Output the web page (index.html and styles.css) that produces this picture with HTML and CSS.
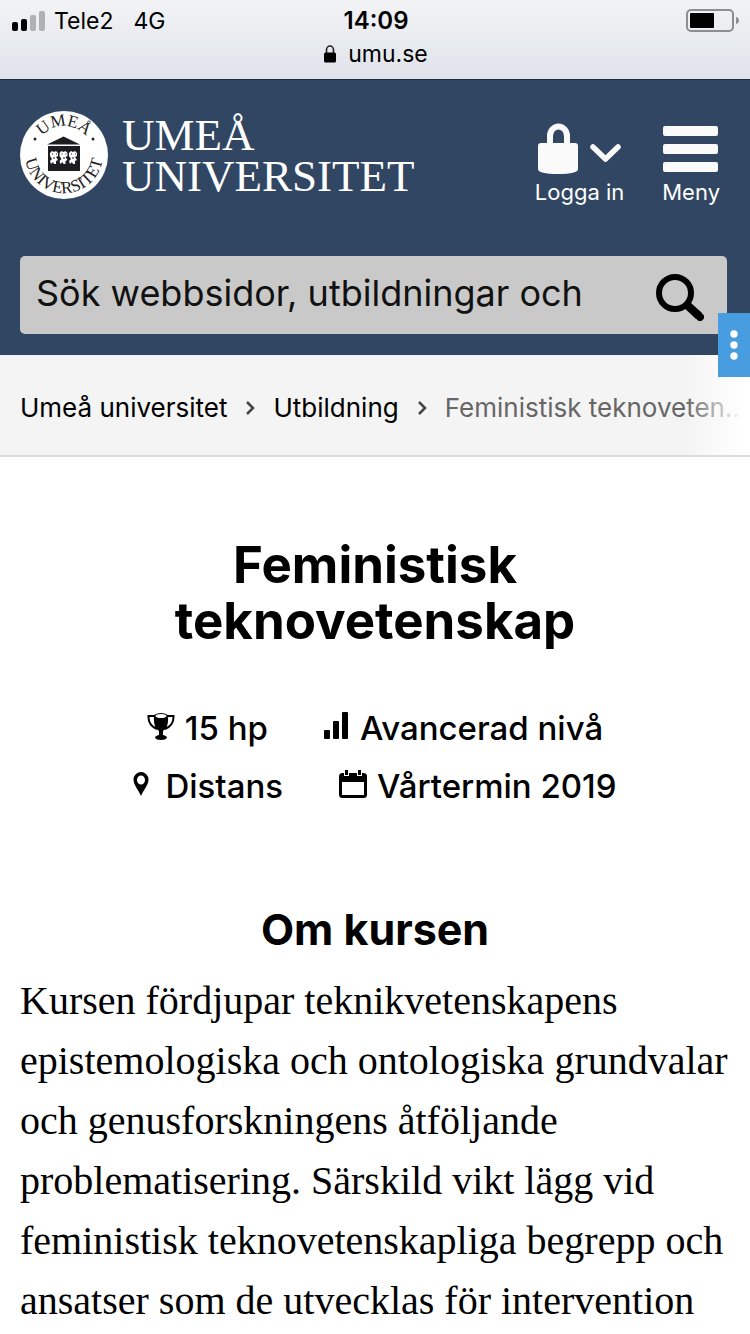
FILE: index.html
```html
<!DOCTYPE html>
<html lang="sv">
<head>
<meta charset="utf-8">
<meta name="viewport" content="width=device-width, initial-scale=1">
<title>Feministisk teknovetenskap</title>
<link rel="stylesheet" href="styles.css">
</head>
<body>
<div class="status">
  <div class="status-row">
    <div class="carrier">
      <svg class="signal" viewBox="0 0 34 20" width="34" height="20" aria-hidden="true">
        <rect x="0" y="11" width="6" height="9" rx="2"/>
        <rect x="9" y="8" width="6" height="12" rx="2"/>
        <rect x="18" y="4" width="6" height="16" rx="2" fill="#b0b1b3"/>
        <rect x="27" y="0" width="6" height="20" rx="2" fill="#b0b1b3"/>
      </svg>
      <span>Tele2</span>
      <span class="network">4G</span>
    </div>
    <span class="clock">14:09</span>
    <svg class="battery" viewBox="0 0 54 24" width="54" height="24" aria-hidden="true">
      <rect x="1" y="1" width="46" height="21" rx="4" fill="none" stroke="#8d8e91" stroke-width="2"/>
      <rect x="4" y="4" width="24" height="15" rx="1"/>
      <path d="M50 8Q53 9 53 11.500T50 15Z" fill="#8d8e91"/>
    </svg>
  </div>
  <div class="address">
    <svg viewBox="0 0 12 18" width="12" height="18" aria-hidden="true">
      <path d="M2.500 8V5a3.500 4 0 0 1 7 0V8" fill="none" stroke="#222" stroke-width="1.600"/>
      <rect x="0" y="7.500" width="12" height="10" rx="1.500"/>
    </svg>
    <span>umu.se</span>
  </div>
</div>

<header class="header">
  <div class="masthead">
    <a class="brand" href="#">
      <svg class="seal" viewBox="0 0 88 88" width="88" height="88" aria-hidden="true">
        <defs>
          <path id="arc-top" d="M15 44a29 29 0 0 1 58 0"/>
          <path id="arc-bottom" d="M9 26A39 39 0 1 0 79 26"/>
        </defs>
        <circle cx="44" cy="44" r="44" fill="#fff"/>
        <text class="seal-text"><textPath href="#arc-top" startOffset="50%" text-anchor="middle">UMEÅ</textPath></text>
        <text class="seal-text"><textPath href="#arc-bottom" startOffset="50%" text-anchor="middle">UNIVERSITET</textPath></text>
        <circle cx="15" cy="28" r="1.500" fill="#222"/>
        <circle cx="73" cy="28" r="1.500" fill="#222"/>
        <path d="M27 33.500L43.500 25.500L60 33.500Z" fill="#1d1d1f"/>
        <rect x="28" y="35" width="32" height="25" fill="#1d1d1f"/>
        <g fill="#fff">
          <path id="owl" d="M30 42l2-2 2 1 2-1 2 2v3l-2 1 2 3-2 1v3h-2l-1-2-2 2-1-3 2-2-2-3z"/>
          <use href="#owl" x="9.500"/>
          <use href="#owl" x="19"/>
        </g>
        <path d="M32 43h1M36 43h1M41.500 43h1M45.500 43h1M51 43h1M55 43h1M33 47h2M43 47h2M52 47h2" stroke="#1d1d1f"/>
      </svg>
      <span class="wordmark">UMEÅ<br>UNIVERSITET</span>
    </a>
    <div class="actions">
      <button class="action" type="button">
        <svg viewBox="0 0 84 52" width="84" height="52" aria-hidden="true">
          <path d="M12 24V13a8.500 9.500 0 0 1 17 0V24" fill="none" stroke="#fafafa" stroke-width="6"/>
          <path d="M0 23q0-3 3-3H37q3 0 3 3V46q0 5-20 5T0 46Z" fill="#fafafa"/>
          <path d="M55 24l12.500 12L80 24" fill="none" stroke="#fafafa" stroke-width="5.500" stroke-linecap="round" stroke-linejoin="round"/>
        </svg>
        <span>Logga in</span>
      </button>
      <button class="action action-menu" type="button">
        <svg viewBox="0 0 56 48" width="56" height="48" aria-hidden="true">
          <g fill="#fafafa"><rect x="0" y="1" width="55" height="10" rx="2"/><rect x="0" y="19" width="55" height="10" rx="2"/><rect x="0" y="37" width="55" height="10" rx="2"/></g>
        </svg>
        <span>Meny</span>
      </button>
    </div>
  </div>
  <form class="search" role="search">
    <input class="search-input" type="text" aria-label="Sök" placeholder="Sök webbsidor, utbildningar och">
    <button class="search-button" type="button" aria-label="Sök">
      <svg viewBox="0 0 48 48" width="48" height="48" aria-hidden="true">
        <circle cx="19" cy="20" r="16" fill="none" stroke="#000" stroke-width="6"/>
        <path d="M30 31L43 43" stroke="#000" stroke-width="8.500"/>
        <path d="M40 40l4 4" stroke="#000" stroke-width="8" stroke-linecap="round"/>
      </svg>
    </button>
  </form>
  <button class="side-tab" type="button" aria-label="Fler val">
    <svg viewBox="0 0 8 32" width="8" height="32" aria-hidden="true"><g fill="#fff"><circle cx="4" cy="5" r="3.700"/><circle cx="4" cy="16" r="3.700"/><circle cx="4" cy="27" r="3.700"/></g></svg>
  </button>
</header>

<nav class="breadcrumbs" aria-label="Brödsmulor">
  <a href="#">Umeå universitet</a>
  <svg viewBox="0 0 10 16" width="10" height="16" aria-hidden="true"><path d="M2 2l6 6-6 6" fill="none" stroke="#444" stroke-width="2.500"/></svg>
  <a href="#">Utbildning</a>
  <svg viewBox="0 0 10 16" width="10" height="16" aria-hidden="true"><path d="M2 2l6 6-6 6" fill="none" stroke="#444" stroke-width="2.500"/></svg>
  <span class="current">Feministisk teknoveten...</span>
</nav>

<main class="main">
  <h1>Feministisk<br>teknovetenskap</h1>
  <div class="facts">
    <div class="fact-row">
      <span class="fact">
        <svg viewBox="0 0 28 28" width="28" height="28" aria-hidden="true">
          <path d="M7 3Q14-1 21 3Q22 16 16 19V23Q20 24 20 25.500Q19 28 14 28T8 25.500Q8 24 12 23V19Q6 16 7 3Z"/>
          <ellipse cx="14" cy="4" rx="5.500" ry="2" fill="#fff"/>
          <path d="M8 4H1.500Q1 13 10 17M20 4h6.500Q27 13 18 17" fill="none" stroke="#000" stroke-width="2"/>
        </svg>
        15 hp
      </span>
      <span class="fact">
        <svg viewBox="0 0 26 28" width="26" height="28" aria-hidden="true"><rect x="0" y="18" width="6" height="9" rx="1"/><rect x="9" y="9" width="6" height="18" rx="1"/><rect x="18" y="0" width="6" height="27" rx="1"/></svg>
        Avancerad nivå
      </span>
    </div>
    <div class="fact-row">
      <span class="fact">
        <svg class="pin" viewBox="0 0 16 26" width="16" height="26" aria-hidden="true"><path fill-rule="evenodd" d="M8 1a7.500 7.500 0 0 1 7.500 7.500C15.500 14 11 18 8 25C5 18 .5 14 .5 8.500A7.500 7.500 0 0 1 8 1Zm0 3.500a4 4.500 0 1 0 0 9a4 4.500 0 1 0 0-9Z"/></svg>
        Distans
      </span>
      <span class="fact">
        <svg viewBox="0 0 28 28" width="28" height="28" aria-hidden="true">
          <rect x="1.500" y="4.500" width="25" height="22" rx="2" fill="#fff" stroke="#000" stroke-width="3"/>
          <rect x="1" y="4" width="26" height="8"/>
          <path d="M7.500 0v6M20.500 0v6" stroke="#fff" stroke-width="5"/>
          <path d="M7.500 0v5M20.500 0v5" stroke="#000" stroke-width="3"/>
        </svg>
        Vårtermin 2019
      </span>
    </div>
  </div>
  <h2>Om kursen</h2>
  <p class="intro">Kursen fördjupar teknikvetenskapens<br>
    epistemologiska och ontologiska grundvalar<br>
    och genusforskningens åtföljande<br>
    problematisering. Särskild vikt lägg vid<br>
    feministisk teknovetenskapliga begrepp och<br>
    ansatser som de utvecklas för intervention</p>
</main>
</body>
</html>
```
FILE: styles.css
```css
* { box-sizing: border-box; }
body {
  margin: 0;
  background: #fff;
  color: #000;
  font-family: Inter, "Liberation Sans", sans-serif;
}
svg { display: block; flex: none; }
a { color: inherit; text-decoration: none; }
button { margin: 0; padding: 0; border: 0; background: none; color: inherit; font: inherit; }

.status {
  padding: 6px 10px 8px 12px;
  height: 79px;
  background: linear-gradient(#f2f3f5, #dfe3ea);
  font-size: 23px;
  line-height: 30px;
}
.status-row { display: grid; grid-template-columns: 1fr auto 1fr; align-items: center; }
.carrier { display: flex; align-items: center; gap: 8px; }
.network { margin-left: 12px; }
.clock { font-size: 24px; font-weight: 600; }
.battery { justify-self: end; }
.address { display: flex; align-items: center; justify-content: center; gap: 12px; line-height: 36px; }

.header {
  position: relative;
  padding: 31px 23px 21px 20px;
  border-top: 1px solid #1d2a40;
  background: #314663;
  color: #fff;
}
.masthead { display: flex; justify-content: space-between; align-items: flex-start; }
.brand { display: flex; gap: 14px; }
.seal-text { font-family: "Liberation Serif", serif; font-size: 17px; fill: #222; }
.wordmark { font-family: "Liberation Serif", serif; font-size: 45px; line-height: 41px; padding-top: 4px; }
.actions { display: flex; gap: 38px; padding: 12px 7px 0 0; }
.action { display: flex; flex-direction: column; align-items: center; gap: 4px; font-size: 22px; line-height: 26px; }
.action-menu { padding-top: 2px; gap: 6px; }

.search { display: flex; align-items: center; height: 78px; margin-top: 51px; border-radius: 5px; background: #c9c9c9; color: #000; }
.search-input {
  flex: 1;
  min-width: 0;
  height: 100%;
  padding: 0 16px 4px;
  border: 0;
  background: none;
  color: #000;
  font: 36px Inter, "Liberation Sans", sans-serif;
}
.search-input::placeholder { color: #111; opacity: 1; }
.search-button { margin-right: 23px; padding-top: 4px; }
.side-tab { position: absolute; right: 0; bottom: -22px; z-index: 1; width: 32px; height: 64px; display: grid; place-items: center; background: #479de0; }

.breadcrumbs {
  position: relative;
  display: flex;
  align-items: center;
  gap: 18px;
  height: 102px;
  padding: 6px 0 0 20px;
  border-bottom: 2px solid #dcdcdc;
  background: #f4f4f4;
  font-size: 26px;
  line-height: 36px;
  white-space: nowrap;
  overflow: hidden;
}
.breadcrumbs::after {
  content: "";
  position: absolute;
  inset: 0 0 0 auto;
  width: 64px;
  background: linear-gradient(90deg, rgba(255, 255, 255, 0), #fff 90%);
}
.current { color: #666; }

.main { padding: 80px 20px 0; }
h1, h2 { margin: 0; text-align: center; font-weight: 700; }
h1 { font-size: 51px; line-height: 56px; }
.facts { margin-top: 50px; font-size: 33px; font-weight: 500; line-height: 58px; }
.fact-row { display: flex; justify-content: center; gap: 56px; }
.fact { display: flex; align-items: center; gap: 10px; }
.fact svg { margin-bottom: 4px; }
.pin { margin-right: 6px; }
h2 { margin-top: 86px; font-size: 43px; line-height: 56px; }
.intro { margin: 14px 0 0; font-family: "Liberation Serif", serif; font-size: 40px; line-height: 60px; white-space: nowrap; }
```
